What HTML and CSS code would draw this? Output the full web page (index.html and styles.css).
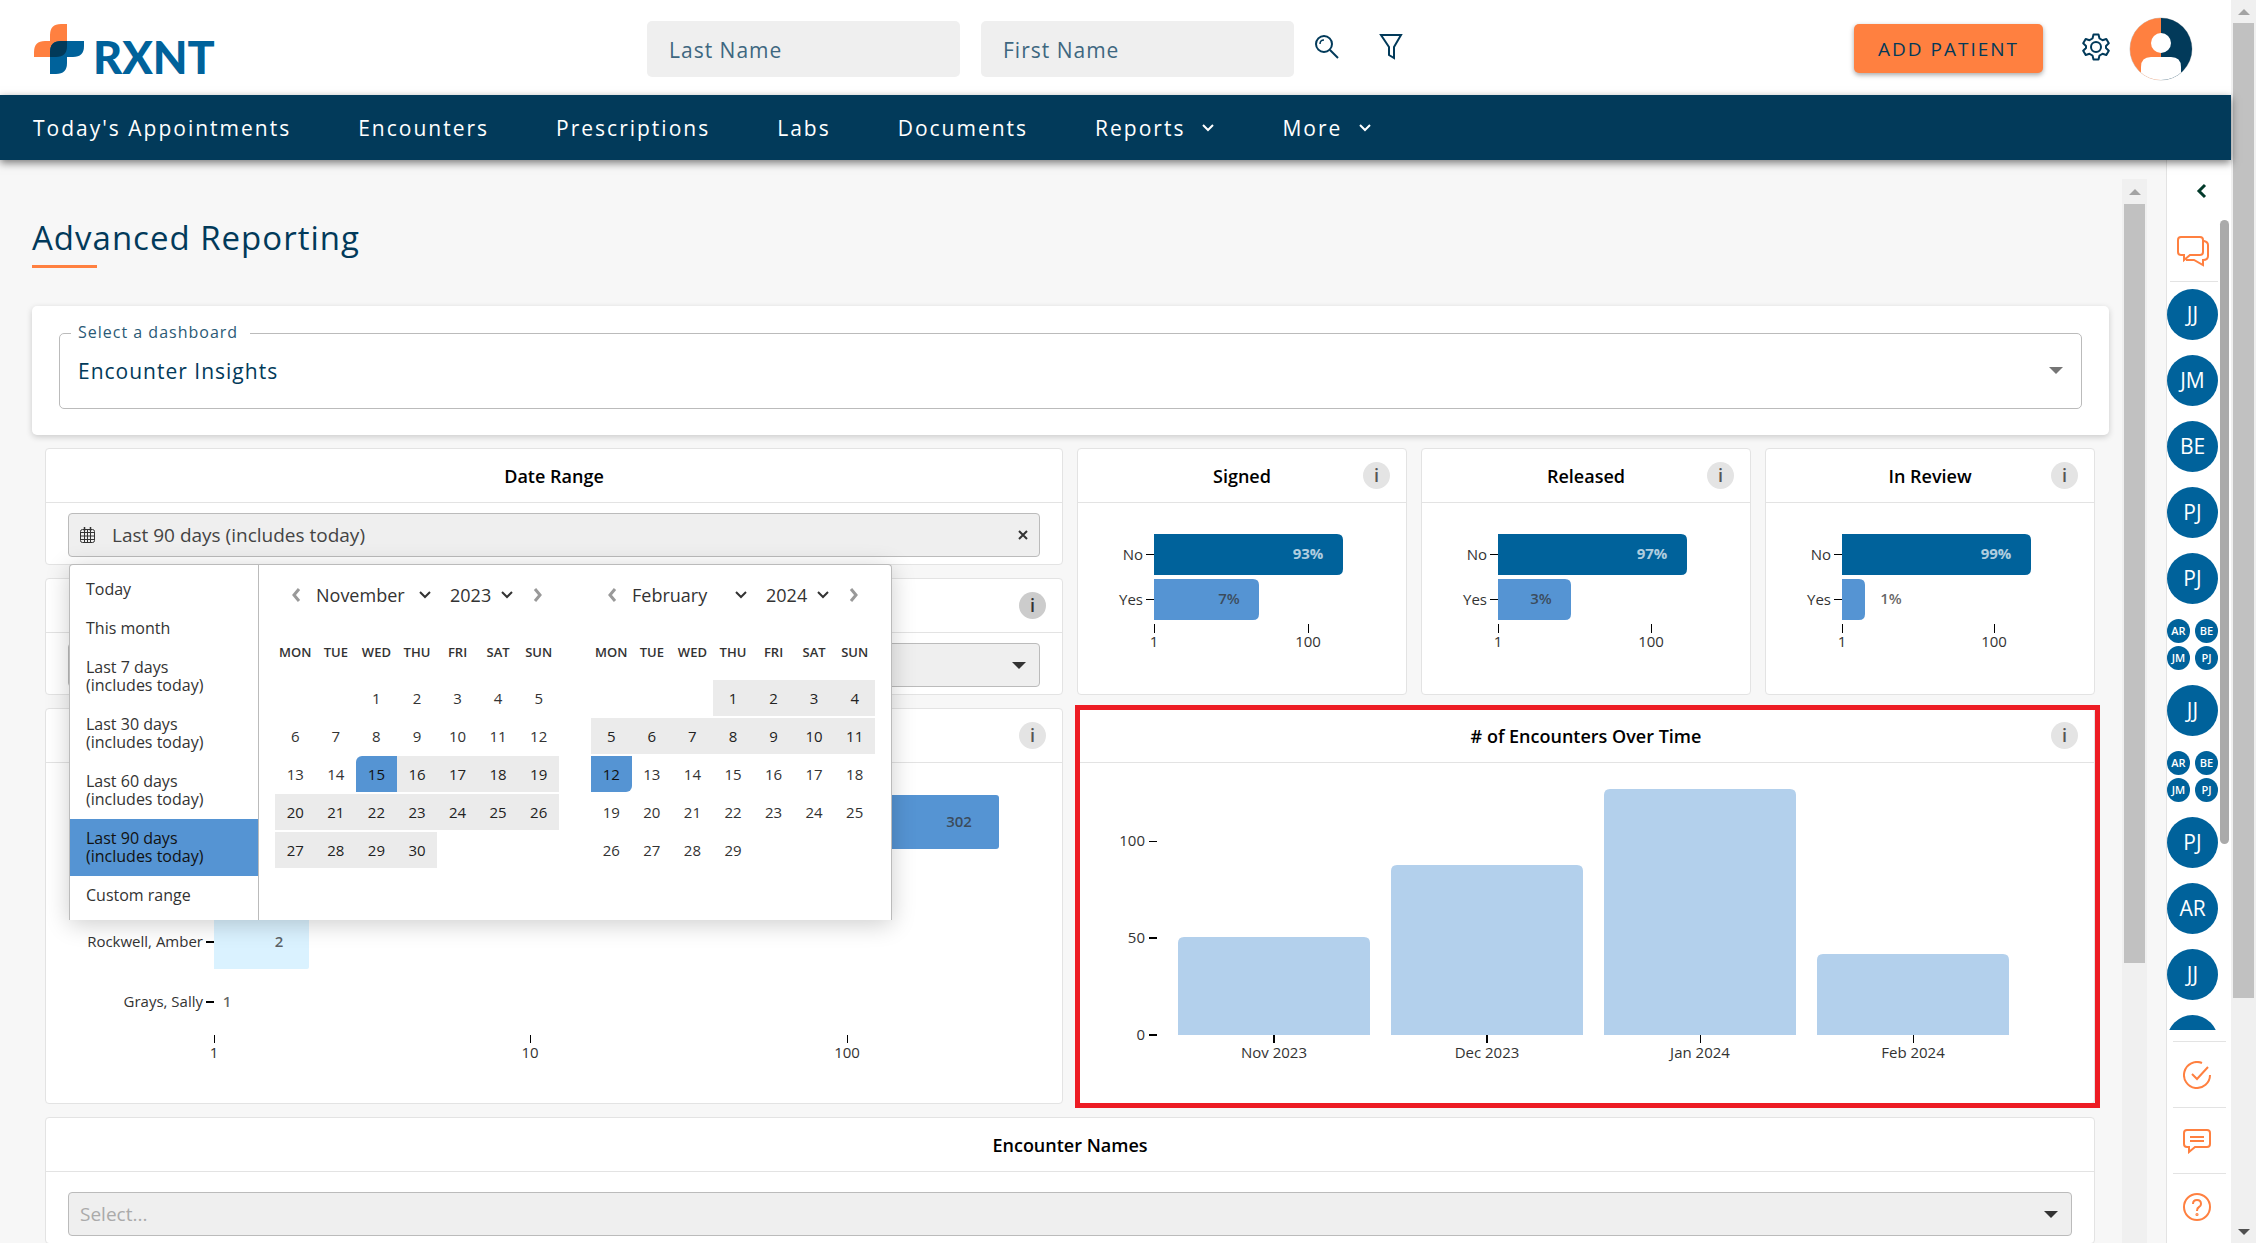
FILE: index.html
```html
<!DOCTYPE html>
<html lang="en">

<head>
  <meta charset="UTF-8">
  <title>RXNT - Advanced Reporting</title>
  <meta name="viewport" content="width=device-width, initial-scale=1.0">
  <link rel="stylesheet" href="styles.css">
</head>

<body>
  <!-- shared icons -->
  <svg class="sprite" aria-hidden="true">
    <symbol id="chevron-down" viewBox="0 0 14 10">
      <path d="M2 2l5 5 5-5" fill="none" stroke="currentColor" stroke-width="2" />
    </symbol>
    <symbol id="chevron-left" viewBox="0 0 10 14">
      <path d="M8 1L3 7l5 6" fill="none" stroke="currentColor" stroke-width="3" />
    </symbol>
    <symbol id="chevron-right" viewBox="0 0 10 14">
      <path d="M2 1l5 6-5 6" fill="none" stroke="currentColor" stroke-width="3" />
    </symbol>
    <symbol id="caret" viewBox="0 0 14 7">
      <path d="M0 0h14L7 7z" fill="currentColor" />
    </symbol>
  </svg>

  <div class="app">
    <div class="page">
      <header class="topbar">
        <a class="logo" href="#">
          <svg width="50" height="50" viewBox="0 0 50 50" aria-hidden="true">
            <path d="M33 0v33H0v-5q0-11 11-11h5v-6Q16 0 27 0z" fill="#ff8040" />
            <path d="M16 50V28q0-11 11-11h23v5q0 11-11 11h-6v6q0 11-11 11z" fill="#00629b" />
            <path d="M16 33v-5q0-11 11-11h6v5q0 11-11 11z" fill="#023a5a" />
          </svg>
          <span>RXNT</span>
        </a>
        <form class="search">
          <input type="text" placeholder="Last Name" aria-label="Last Name">
          <input type="text" placeholder="First Name" aria-label="First Name">
          <button type="button" class="icon-btn" aria-label="Search">
            <svg width="24" height="24" viewBox="0 0 24 24" fill="none" stroke="currentColor" stroke-width="2">
              <circle cx="9" cy="9" r="8" />
              <path d="M15 15l8 8" />
              <path d="M5 9q0-4 4-4" stroke-width="1.5" />
            </svg>
          </button>
          <button type="button" class="icon-btn" aria-label="Filter">
            <svg width="24" height="26" viewBox="0 0 24 26" fill="none" stroke="currentColor" stroke-width="2">
              <path d="M2 1h20l-7 12v11l-5-3v-8z" />
            </svg>
          </button>
        </form>
        <div class="account">
          <button class="add-btn">ADD PATIENT</button>
          <button class="icon-btn gear" aria-label="Settings">
            <svg width="28" height="28" viewBox="0 0 28 28" fill="none" stroke="currentColor" stroke-width="2">
              <circle cx="14" cy="14" r="5" />
              <path d="M11.500 1.500h5l1 4 3 1.700 3.800-1.200 2.500 4.300-2.800 2.700v2l2.800 2.700-2.500 4.300-3.800-1.200-3 1.700-1 4h-5l-1-4-3-1.700L3.700 22l-2.500-4.300L4 15v-2l-2.800-2.700L3.700 6l3.800 1.200 3-1.700z" stroke-linejoin="round" />
            </svg>
          </button>
          <svg class="me" width="64" height="64" viewBox="0 0 64 64" role="img" aria-label="My account">
            <clipPath id="meClip"><circle cx="32" cy="32" r="31" /></clipPath>
            <circle cx="32" cy="32" r="31" fill="#fff" stroke="#ccc" />
            <g clip-path="url(#meClip)">
              <path d="M0 0h32v64H0z" fill="#ff8040" />
              <path d="M32 0h32v64H32z" fill="#023a5a" />
              <circle cx="32" cy="26" r="10" fill="#fff" />
              <path d="M12 64V50q0-10 10-10h20q10 0 10 10v14z" fill="#fff" />
            </g>
          </svg>
        </div>
      </header>

      <nav class="nav">
        <a href="#">Today's Appointments</a>
        <a href="#">Encounters</a>
        <a href="#">Prescriptions</a>
        <a href="#">Labs</a>
        <a href="#">Documents</a>
        <a href="#">Reports <svg width="14" height="10"><use href="#chevron-down" /></svg></a>
        <a href="#">More <svg width="14" height="10"><use href="#chevron-down" /></svg></a>
      </nav>

      <div class="body">
        <main class="content">
          <h1>Advanced Reporting</h1>

          <section class="picker">
            <fieldset>
              <legend><label for="dashboard">Select a dashboard</label></legend>
              <div class="select-wrap">
                <select id="dashboard">
                  <option>Encounter Insights</option>
                </select>
                <svg width="14" height="7"><use href="#caret" /></svg>
              </div>
            </fieldset>
          </section>

          <div class="dashboard">
            <div class="filters">
              <section class="card date-card">
                <div class="card-head">
                  <h2>Date Range</h2>
                </div>
                <div class="card-body">
                  <div class="field">
                    <svg class="cal-icon" width="15" height="16" viewBox="0 0 15 16" fill="none" stroke="currentColor">
                      <rect x="0.5" y="2.500" width="14" height="13" rx="2" />
                      <path d="M1 5.500h13M1 9h13M1 12.500h13M4.500 3v12M7.500 3v12M10.500 3v12" />
                      <path d="M4.500 0v4M10.500 0v4" stroke-width="1.500" />
                    </svg>
                    <input type="text" value="Last 90 days (includes today)" aria-label="Date range">
                    <button class="clear" aria-label="Clear">
                      <svg width="10" height="10" viewBox="0 0 10 10" stroke="currentColor" stroke-width="2"><path d="M1 1l8 8M9 1L1 9" /></svg>
                    </button>
                  </div>
                </div>

                <div class="popover">
                  <ul class="presets">
                    <li><button>Today</button></li>
                    <li><button>This month</button></li>
                    <li><button>Last 7 days<br>(includes today)</button></li>
                    <li><button>Last 30 days<br>(includes today)</button></li>
                    <li><button>Last 60 days<br>(includes today)</button></li>
                    <li><button class="active">Last 90 days<br>(includes today)</button></li>
                    <li><button>Custom range</button></li>
                  </ul>
                  <div class="months">
                    <div class="month">
                      <div class="month-head">
                        <button aria-label="Previous month"><svg width="10" height="14"><use href="#chevron-left" /></svg></button>
                        <div class="mini-select">
                          <select class="sel-month" aria-label="Start month">
                            <option>November</option>
                          </select>
                          <svg width="14" height="10"><use href="#chevron-down" /></svg>
                        </div>
                        <div class="mini-select">
                          <select class="sel-year" aria-label="Start year">
                            <option>2023</option>
                          </select>
                          <svg width="14" height="10"><use href="#chevron-down" /></svg>
                        </div>
                        <button aria-label="Next month"><svg width="10" height="14"><use href="#chevron-right" /></svg></button>
                      </div>
                      <table>
                        <thead>
                          <tr><th>MON</th><th>TUE</th><th>WED</th><th>THU</th><th>FRI</th><th>SAT</th><th>SUN</th></tr>
                        </thead>
                        <tbody>
                          <tr><td></td><td></td><td>1</td><td>2</td><td>3</td><td>4</td><td>5</td></tr>
                          <tr><td>6</td><td>7</td><td>8</td><td>9</td><td>10</td><td>11</td><td>12</td></tr>
                          <tr><td>13</td><td>14</td><td class="start">15</td><td class="in">16</td><td class="in">17</td><td class="in">18</td><td class="in">19</td></tr>
                          <tr><td class="in">20</td><td class="in">21</td><td class="in">22</td><td class="in">23</td><td class="in">24</td><td class="in">25</td><td class="in">26</td></tr>
                          <tr><td class="in">27</td><td class="in">28</td><td class="in">29</td><td class="in">30</td><td></td><td></td><td></td></tr>
                        </tbody>
                      </table>
                    </div>
                    <div class="month">
                      <div class="month-head">
                        <button aria-label="Previous month"><svg width="10" height="14"><use href="#chevron-left" /></svg></button>
                        <div class="mini-select">
                          <select class="sel-month" aria-label="End month">
                            <option>February</option>
                          </select>
                          <svg width="14" height="10"><use href="#chevron-down" /></svg>
                        </div>
                        <div class="mini-select">
                          <select class="sel-year" aria-label="End year">
                            <option>2024</option>
                          </select>
                          <svg width="14" height="10"><use href="#chevron-down" /></svg>
                        </div>
                        <button aria-label="Next month"><svg width="10" height="14"><use href="#chevron-right" /></svg></button>
                      </div>
                      <table>
                        <thead>
                          <tr><th>MON</th><th>TUE</th><th>WED</th><th>THU</th><th>FRI</th><th>SAT</th><th>SUN</th></tr>
                        </thead>
                        <tbody>
                          <tr><td></td><td></td><td></td><td class="in">1</td><td class="in">2</td><td class="in">3</td><td class="in">4</td></tr>
                          <tr><td class="in">5</td><td class="in">6</td><td class="in">7</td><td class="in">8</td><td class="in">9</td><td class="in">10</td><td class="in">11</td></tr>
                          <tr><td class="end">12</td><td>13</td><td>14</td><td>15</td><td>16</td><td>17</td><td>18</td></tr>
                          <tr><td>19</td><td>20</td><td>21</td><td>22</td><td>23</td><td>24</td><td>25</td></tr>
                          <tr><td>26</td><td>27</td><td>28</td><td>29</td><td></td><td></td><td></td></tr>
                        </tbody>
                      </table>
                    </div>
                  </div>
                </div>
              </section>

              <section class="card">
                <div class="card-head">
                  <button class="info dark" aria-label="More info">i</button>
                </div>
                <div class="card-body">
                  <div class="field">
                    <select aria-label="Filter">
                      <option></option>
                    </select>
                    <svg class="caret" width="14" height="7"><use href="#caret" /></svg>
                  </div>
                </div>
              </section>
            </div>

            <div class="stats">
              <section class="card">
                <div class="card-head">
                  <h2>Signed</h2>
                  <button class="info" aria-label="More info">i</button>
                </div>
                <svg class="chart" viewBox="0 0 328 190">
                  <path class="bar-dark" d="M76 31h183q6 0 6 6v29q0 6-6 6H76z" />
                  <path class="bar-mid" d="M76 76h99q6 0 6 6v29q0 6-6 6H76z" />
                  <path class="tick" d="M68 51.500h8M68 96.500h8M76.500 121v9M230.500 121v9" />
                  <text class="label-end" x="65" y="57">No</text>
                  <text class="label-end" x="65" y="102">Yes</text>
                  <text class="value light" x="230" y="56">93%</text>
                  <text class="value" x="151" y="101">7%</text>
                  <text class="label-mid" x="76" y="144">1</text>
                  <text class="label-mid" x="230" y="144">100</text>
                </svg>
              </section>
              <section class="card">
                <div class="card-head">
                  <h2>Released</h2>
                  <button class="info" aria-label="More info">i</button>
                </div>
                <svg class="chart" viewBox="0 0 328 190">
                  <path class="bar-dark" d="M76 31h183q6 0 6 6v29q0 6-6 6H76z" />
                  <path class="bar-mid" d="M76 76h67q6 0 6 6v29q0 6-6 6H76z" />
                  <path class="tick" d="M68 51.500h8M68 96.500h8M76.500 121v9M229.500 121v9" />
                  <text class="label-end" x="65" y="57">No</text>
                  <text class="label-end" x="65" y="102">Yes</text>
                  <text class="value light" x="230" y="56">97%</text>
                  <text class="value" x="119" y="101">3%</text>
                  <text class="label-mid" x="76" y="144">1</text>
                  <text class="label-mid" x="229" y="144">100</text>
                </svg>
              </section>
              <section class="card">
                <div class="card-head">
                  <h2>In Review</h2>
                  <button class="info" aria-label="More info">i</button>
                </div>
                <svg class="chart" viewBox="0 0 328 190">
                  <path class="bar-dark" d="M76 31h183q6 0 6 6v29q0 6-6 6H76z" />
                  <path class="bar-mid" d="M76 76h17q6 0 6 6v29q0 6-6 6H76z" />
                  <path class="tick" d="M68 51.500h8M68 96.500h8M76.500 121v9M228.500 121v9" />
                  <text class="label-end" x="65" y="57">No</text>
                  <text class="label-end" x="65" y="102">Yes</text>
                  <text class="value light" x="230" y="56">99%</text>
                  <text class="value" x="125" y="101">1%</text>
                  <text class="label-mid" x="76" y="144">1</text>
                  <text class="label-mid" x="228" y="144">100</text>
                </svg>
              </section>
            </div>

            <section class="card">
              <div class="card-head">
                <button class="info" aria-label="More info">i</button>
              </div>
              <svg class="chart" viewBox="0 0 1016 340">
                <path class="bar-mid" d="M168 32h782q3 0 3 3v48q0 3-3 3H168z" />
                <path class="bar-pale" d="M168 152h95v52q0 2-2 2h-93z" />
                <path class="tick" d="M168.500 272v8M484.500 272v8M801.500 272v8" />
                <path class="tick bold" d="M160 179h8M160 239h8" />
                <text class="label-end" x="157" y="184">Rockwell, Amber</text>
                <text class="label-end" x="157" y="244">Grays, Sally</text>
                <text class="value" x="913" y="64">302</text>
                <text class="value" x="233" y="184">2</text>
                <text class="value" x="181" y="244">1</text>
                <text class="label-mid" x="168" y="295">1</text>
                <text class="label-mid" x="484" y="295">10</text>
                <text class="label-mid" x="801" y="295">100</text>
              </svg>
            </section>

            <section class="card highlighted">
              <div class="card-head">
                <h2># of Encounters Over Time</h2>
                <button class="info" aria-label="More info">i</button>
              </div>
              <svg class="chart" viewBox="0 0 1016 340">
                <path class="bar-light" d="M100 272v-92q0-6 6-6h180q6 0 6 6v92z" />
                <path class="bar-light" d="M313 272V108q0-6 6-6h180q6 0 6 6v164z" />
                <path class="bar-light" d="M526 272V32q0-6 6-6h180q6 0 6 6v240z" />
                <path class="bar-light" d="M739 272v-75q0-6 6-6h180q6 0 6 6v75z" />
                <path class="tick" d="M71 78.500h8M622.500 272v8M835.500 272v8" />
                <path class="tick bold" d="M71 175h8M71 272h8M196 272v8M409 272v8" />
                <text class="label-end" x="67" y="83">100</text>
                <text class="label-end" x="67" y="180">50</text>
                <text class="label-end" x="67" y="277">0</text>
                <text class="label-mid" x="196" y="295">Nov 2023</text>
                <text class="label-mid" x="409" y="295">Dec 2023</text>
                <text class="label-mid" x="622" y="295">Jan 2024</text>
                <text class="label-mid" x="835" y="295">Feb 2024</text>
              </svg>
            </section>

            <section class="card wide">
              <div class="card-head">
                <h2>Encounter Names</h2>
              </div>
              <div class="card-body">
                <div class="field">
                  <select class="empty" aria-label="Encounter names">
                    <option>Select...</option>
                  </select>
                  <svg class="caret" width="14" height="7"><use href="#caret" /></svg>
                </div>
              </div>
            </section>
          </div>
        </main>

        <div class="scrollbar inner">
          <span class="arrow up"></span>
          <span class="thumb"></span>
        </div>

        <aside class="sidebar">
          <button class="collapse" aria-label="Expand">
            <svg width="12" height="16" viewBox="0 0 12 16"><path d="M10 2L4 8l6 6" fill="none" stroke="currentColor" stroke-width="3" /></svg>
          </button>
          <div class="chats">
            <div class="chat-list">
              <svg class="chat-icon" width="34" height="32" viewBox="0 0 34 32" fill="none" stroke="currentColor" stroke-width="2">
                <path d="M5 1h19q3 0 3 3v12q0 3-3 3H14l-6 5v-5H5q-3 0-3-3V4q0-3 3-3z" />
                <path d="M27 5h1q4 1 4 4v11q0 4-5 4v5l-9-5h-8" />
              </svg>
              <a href="#" class="avatar first">JJ</a>
              <a href="#" class="avatar">JM</a>
              <a href="#" class="avatar">BE</a>
              <a href="#" class="avatar">PJ</a>
              <a href="#" class="avatar">PJ</a>
              <a href="#" class="group"><span>AR</span><span>BE</span><span>JM</span><span>PJ</span></a>
              <a href="#" class="avatar">JJ</a>
              <a href="#" class="group"><span>AR</span><span>BE</span><span>JM</span><span>PJ</span></a>
              <a href="#" class="avatar">PJ</a>
              <a href="#" class="avatar">AR</a>
              <a href="#" class="avatar">JJ</a>
              <a href="#" class="avatar" aria-label="More chats"></a>
            </div>
            <div class="chat-thumb"></div>
          </div>
          <div class="tools">
            <button aria-label="Tasks">
              <svg width="28" height="28" viewBox="0 0 28 28" fill="none" stroke="currentColor" stroke-width="2">
                <path d="M19 2A13 13 0 1 0 27 14" />
                <path d="M9 13l5 5L25 6" />
              </svg>
            </button>
            <button aria-label="Messages">
              <svg width="28" height="26" viewBox="0 0 28 26" fill="none" stroke="currentColor" stroke-width="2">
                <path d="M4 2h20q3 0 3 3v11q0 3-3 3H12l-6 5v-5H4q-3 0-3-3V5q0-3 3-3z" />
                <path d="M7 9h14M7 13h14" />
              </svg>
            </button>
            <button aria-label="Help">
              <svg width="28" height="28" viewBox="0 0 28 28" fill="none" stroke="currentColor" stroke-width="2">
                <circle cx="14" cy="14" r="13" />
                <path d="M10 11q0-4 4-4t4 4q0 2-2 3t-2 4" />
                <circle cx="14" cy="21.500" r="0.600" />
              </svg>
            </button>
          </div>
        </aside>
      </div>
    </div>

    <div class="scrollbar">
      <span class="arrow up"></span>
      <span class="thumb"></span>
      <span class="arrow down"></span>
    </div>
  </div>
</body>

</html>
```
FILE: styles.css
```css
* {
  box-sizing: border-box;
}

body {
  margin: 0;
  background: #f7f7f7;
  color: #333;
  font-family: 'Open Sans', 'Noto Sans', sans-serif;
  font-size: 18px;
}

button,
input,
select {
  font: inherit;
  color: inherit;
  border: none;
  background: none;
  padding: 0;
  margin: 0;
}

button {
  cursor: pointer;
}

select {
  appearance: none;
}

svg {
  display: block;
}

.sprite {
  position: absolute;
  width: 0;
  height: 0;
}

.app {
  display: flex;
  height: 100vh;
  overflow: hidden;
}

.page {
  flex: 1;
  min-width: 0;
  display: flex;
  flex-direction: column;
}

/* Header */
.topbar {
  display: grid;
  grid-template-columns: 613px 1fr auto;
  align-items: center;
  height: 95px;
  padding: 2px 38px 0 34px;
  background: #fff;
  color: #023a5a;
}

.logo {
  display: flex;
  align-items: center;
  gap: 9px;
  color: #00629b;
  font-family: Lato, sans-serif;
  font-size: 45px;
  font-weight: 900;
  line-height: 50px;
  text-decoration: none;
}

.logo span {
  margin-top: 16px;
}

.search {
  display: flex;
  align-items: center;
}

.search input {
  width: 313px;
  height: 56px;
  margin-right: 21px;
  padding: 2px 22px 0;
  border-radius: 5px;
  background: #efefef;
  font-size: 21px;
  letter-spacing: 1px;
}

.search input::placeholder {
  color: #3e6780;
}

.icon-btn {
  padding-bottom: 4px;
}

.search .icon-btn {
  margin-right: 40px;
}

.account {
  display: flex;
  align-items: center;
}

.add-btn {
  width: 189px;
  height: 49px;
  border-radius: 5px;
  background: #ff8040;
  box-shadow: 0 2px 5px rgba(0, 0, 0, 0.35);
  font-size: 19px;
  font-weight: 500;
  letter-spacing: 2px;
}

.gear {
  margin: 0 19px 0 39px;
}

.nav {
  position: relative;
  z-index: 2;
  display: flex;
  align-items: center;
  gap: 67px;
  height: 65px;
  padding: 0 33px;
  background: #023a5a;
  box-shadow: 0 3px 8px rgba(0, 0, 0, 0.5);
}

.nav a {
  display: flex;
  align-items: center;
  gap: 16px;
  color: #fff;
  font-size: 21px;
  letter-spacing: 2px;
  text-decoration: none;
  white-space: nowrap;
}

.body {
  flex: 1;
  min-height: 0;
  display: flex;
}

.content {
  flex: 1;
  min-width: 0;
  padding: 56px 13px 0 32px;
}

h1 {
  margin: 0 0 38px;
  color: #023a5a;
  font-size: 33px;
  font-weight: 400;
  line-height: 44px;
  letter-spacing: 1px;
}

h1::after {
  content: "";
  display: block;
  width: 65px;
  height: 3px;
  margin-top: 5px;
  background: #ff8040;
}

/* Dashboard picker */
.picker {
  padding: 17px 27px 26px;
  border-radius: 5px;
  background: #fff;
  box-shadow: 0 2px 6px rgba(0, 0, 0, 0.18);
}

fieldset {
  margin: 0;
  padding: 0 11px;
  border: 1px solid #bbb;
  border-radius: 5px;
  color: #023a5a;
}

legend {
  padding: 0 12px 2px 7px;
  color: #2b5a76;
  font-size: 16px;
  line-height: 18px;
  letter-spacing: 1px;
}

.select-wrap {
  display: flex;
  align-items: center;
  height: 65px;
  padding: 0 7px 10px;
}

.select-wrap select {
  flex: 1;
  height: 55px;
  margin-right: -14px;
  font-size: 21px;
  letter-spacing: 1px;
}

.select-wrap svg {
  color: #757575;
  pointer-events: none;
}

/* Cards */
.dashboard {
  display: grid;
  grid-template-columns: 1fr 1fr;
  gap: 13px 14px;
  margin: 13px 14px 0 13px;
}

.filters {
  display: flex;
  flex-direction: column;
  gap: 13px;
}

.stats {
  display: grid;
  grid-template-columns: repeat(3, 1fr);
  gap: 14px;
}

.card {
  position: relative;
  border: 1px solid #e3e3e3;
  border-radius: 4px;
  background: #fff;
}

.wide {
  grid-column: 1 / -1;
}

.highlighted::after {
  content: "";
  position: absolute;
  inset: -4px -6px -5px -3px;
  border: 5px solid #ed1c24;
  pointer-events: none;
}

.card-head {
  display: grid;
  grid-template-columns: 1fr auto 1fr;
  align-items: center;
  height: 54px;
  padding: 0 16px;
  border-bottom: 1px solid #e3e3e3;
}

h2 {
  grid-column: 2;
  margin: 0;
  color: #000;
  font-size: 18px;
  font-weight: 600;
}

.info {
  grid-column: 3;
  justify-self: end;
  width: 27px;
  height: 27px;
  border-radius: 50%;
  background: #e4e4e4;
  color: #555;
  font-size: 18px;
  font-weight: 600;
  line-height: 27px;
}

.info.dark {
  background: #ccc;
  color: #333;
}

.card-body {
  padding: 10px 22px 7px;
}

.wide .card-body {
  padding-top: 20px;
}

.field {
  display: flex;
  align-items: center;
  height: 44px;
  padding: 0 11px;
  border: 1px solid #bbb;
  border-radius: 4px;
  background: #efefef;
}

.field input,
.field select {
  flex: 1;
  min-width: 0;
  height: 42px;
  font-size: 19px;
}

.field input {
  margin-left: 17px;
  color: #444;
}

.field select {
  margin-right: -14px;
}

.field select.empty {
  color: #aaa;
}

.field .caret {
  margin-right: 2px;
  pointer-events: none;
}

.clear {
  padding: 2px 0;
}

/* Date popover */
.popover {
  position: absolute;
  z-index: 1;
  top: 115px;
  left: 23px;
  display: flex;
  height: 356px;
  border: 1px solid #bbb;
  border-bottom: none;
  border-radius: 4px 4px 0 0;
  background: #fff;
  box-shadow: 0 4px 24px rgba(0, 0, 0, 0.2);
}

.presets {
  width: 189px;
  margin: 0;
  padding: 5px 0 0;
  border-right: 1px solid #bbb;
  list-style: none;
}

.presets button {
  display: block;
  width: 100%;
  padding: 10px 16px 11px;
  font-size: 16px;
  line-height: 18px;
  text-align: left;
}

.presets .active {
  background: #5594d3;
  color: #111;
}

.months {
  display: flex;
  gap: 32px;
  padding: 0 16px;
}

.month {
  width: 284px;
}

.month-head {
  display: flex;
  align-items: center;
  height: 59px;
  padding: 0 16px;
}

.month-head button {
  color: #999;
}

.mini-select {
  display: flex;
  align-items: center;
}

.mini-select select {
  height: 30px;
  margin-right: -14px;
}

.mini-select svg {
  pointer-events: none;
}

.sel-month {
  width: 116px;
  margin-left: 15px;
}

.sel-year {
  width: 64px;
  margin-left: 18px;
}

.mini-select + button {
  margin-left: 19px;
}

.month table {
  width: 100%;
  table-layout: fixed;
  border-spacing: 0 2px;
  font-size: 15px;
  text-align: center;
}

th,
td {
  height: 36px;
  padding: 0;
}

th {
  height: 52px;
  font-size: 13px;
  font-weight: 600;
}

.in {
  background: #ebebeb;
  color: #222;
}

.start,
.end {
  background: #5594d3;
  color: #111;
}

.start {
  border-top-left-radius: 6px;
}

.end {
  border-bottom-right-radius: 6px;
}

/* Charts */
.chart {
  width: 100%;
  fill: #333;
  font-size: 15px;
}

.label-end {
  text-anchor: end;
}

.label-mid {
  text-anchor: middle;
}

.value {
  fill: #333;
  fill-opacity: 0.75;
  font-weight: 600;
  text-anchor: middle;
}

.value.light {
  fill: #fff;
  fill-opacity: 0.7;
  font-weight: 700;
}

.tick {
  stroke: #000;
}

.tick.bold {
  stroke-width: 2;
}

.bar-dark {
  fill: #00629b;
}

.bar-mid {
  fill: #5594d3;
}

.bar-light {
  fill: #b3d0ec;
}

.bar-pale {
  fill: #daf2ff;
}

/* Scrollbars */
.scrollbar {
  display: flex;
  flex-direction: column;
  align-items: center;
  width: 25px;
  background: #f0f0f0;
}

.scrollbar .thumb {
  width: 21px;
  height: 975px;
  background: #c1c1c1;
}

.scrollbar.inner {
  margin: 19px 19px 0 0;
}

.inner .thumb {
  height: 759px;
}

.arrow {
  width: 0;
  margin: 8px 0;
  border: 6px solid transparent;
}

.arrow.up {
  height: 7px;
  border-top: none;
  border-bottom-color: #a3a3a3;
}

.inner .arrow {
  margin: 9px 0;
}

.arrow.down {
  margin-top: auto;
  border-bottom: none;
  border-top-color: #505050;
}

/* Right rail */
.sidebar {
  display: flex;
  flex-direction: column;
  width: 65px;
  border-left: 1px solid #e3e3e3;
  background: #fff;
  color: #ff8040;
}

.collapse {
  height: 60px;
  padding: 2px 24px 0 28px;
  color: #023a2a;
}

.chats {
  flex: 1;
  min-height: 0;
  display: flex;
  justify-content: space-between;
  padding-right: 2px;
}

.chat-list {
  display: flex;
  flex-direction: column;
  gap: 15px;
  width: 51px;
  overflow: hidden;
}

.chat-icon {
  flex: none;
  margin: 16px 0 0 9px;
}

.avatar,
.group {
  flex: none;
  height: 51px;
  color: #fff;
  font-size: 21px;
  line-height: 51px;
  text-align: center;
  text-decoration: none;
}

.avatar {
  border-radius: 50%;
  background: #00629b;
}

.avatar.first {
  position: relative;
  margin-top: 6px;
}

/* divider under the chat icon */
.avatar.first::before {
  content: "";
  position: absolute;
  top: -8px;
  left: 3px;
  right: 0;
  height: 1px;
  background: #e3e3e3;
}

.group {
  display: grid;
  grid-template-columns: 23px 23px;
  gap: 3px 5px;
  font-size: 11px;
  font-weight: 600;
}

.group span {
  height: 24px;
  border-radius: 50%;
  background: #00629b;
  line-height: 24px;
}

.chat-thumb {
  width: 9px;
  height: 624px;
  border-radius: 5px;
  background: #aaa;
}

.tools {
  margin-top: 11px;
  padding: 0 5px 4px 6px;
}

.tools button {
  display: flex;
  align-items: center;
  justify-content: center;
  width: 100%;
  height: 66px;
  padding-right: 6px;
  border-top: 1px solid #e3e3e3;
}
```
